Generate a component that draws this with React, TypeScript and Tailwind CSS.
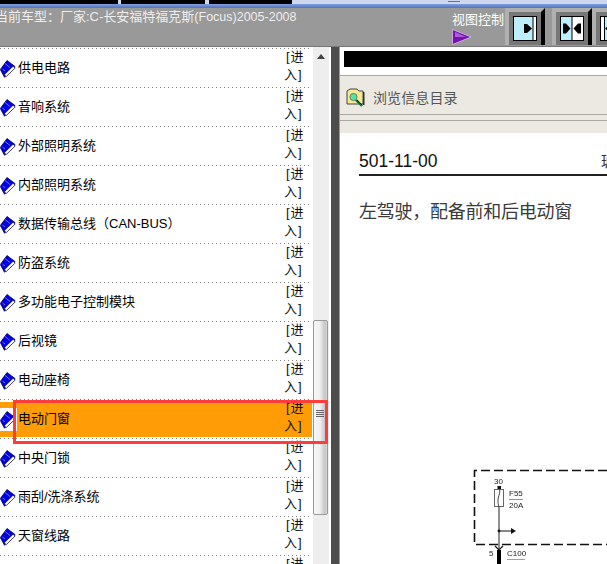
const rows = ['供电电路','音响系统','外部照明系统','内部照明系统','数据传输总线（CAN-BUS）','防盗系统','多功能电子控制模块','后视镜','电动座椅','电动门窗','中央门锁','雨刮/洗涤系统','天窗线路',''];

function Book() {
  return (
    <svg width="16" height="18" viewBox="0 0 16 18" className="block shrink-0">
      <polygon points="7,0.5 15,6.5 4.5,17.3 0.3,9.5" fill="#0000e6" stroke="#00005a" strokeWidth="0.8" />
      <polygon points="13,6.3 15.2,8 6.2,16.6 4.3,14.8" fill="#ffffff" stroke="#10104a" strokeWidth="0.8" />
      <path d="M5 3.5 L10 7.5" stroke="#6a78ff" strokeWidth="1" />
      <path d="M2.5 9 L5 11" stroke="#6a78ff" strokeWidth="1" />
    </svg>
  );
}

function ViewButton({ kind }: { kind: number }) {
  return (
    <svg width="40" height="37" viewBox="0 0 40 37" className="block shrink-0">
      <rect x="0" y="0" width="40" height="37" fill="#b0b0b0" />
      <rect x="4" y="4" width="32" height="33" fill="#777777" />
      <polygon points="36,4 40,0 40,37 36,37" fill="#000000" />
      <rect x="8.5" y="8.5" width="23" height="24" fill="#bdeeff" stroke="#000000" />
      {kind === 0 && (
        <>
          <rect x="28" y="9" width="3" height="23" fill="#ffffff" />
          <rect x="27.5" y="9" width="1" height="23" fill="#000000" />
          <polygon points="19,16 22,16 27,20.5 22,25 19,25" fill="#000000" />
        </>
      )}
      {kind === 1 && (
        <>
          <rect x="20" y="9" width="11" height="23" fill="#ffffff" />
          <rect x="19.5" y="9" width="1" height="23" fill="#000000" />
          <polygon points="11,15.5 14,15.5 18.5,20.5 14,25.5 11,25.5" fill="#000000" />
          <polygon points="29,15.5 26,15.5 21.5,20.5 26,25.5 29,25.5" fill="#000000" />
        </>
      )}
      {kind === 2 && (
        <>
          <rect x="9" y="9" width="3" height="23" fill="#ffffff" />
          <rect x="12" y="9" width="1" height="23" fill="#000000" />
          <polygon points="21,16 18,16 13,20.5 18,25 21,25" fill="#000000" />
        </>
      )}
    </svg>
  );
}

function Row({ label, active }: { label: string; active: boolean }) {
  return (
    <div className="h-[39px] shrink-0 flex flex-col">
      <div className={active ? 'mt-[2px] mr-[1px] h-[35px] bg-[#ff9c06] flex items-center' : 'mt-[2px] mr-[1px] h-[35px] flex items-center'}>
        <div className="w-[17px] h-[23px] bg-white flex items-center shrink-0">
          <Book />
        </div>
        <div className="flex-1 text-[13px] leading-[18px] text-black whitespace-nowrap pl-[1px] mb-[1px]">{label}</div>
        <div className="w-[27px] shrink-0 text-[13px] leading-[18px] text-[#111] tracking-[1px] mb-[5px]">
          <div className="pl-[1px]">[进</div>
          <div className="-ml-[1px]">入]</div>
        </div>
      </div>
      <div className="mt-[1px] h-px mr-[3px] bg-[repeating-linear-gradient(90deg,#808080_0,#808080_1px,transparent_1px,transparent_4px)]" />
    </div>
  );
}

function Scrollbar() {
  return (
    <div className="relative w-[16px] shrink-0 bg-[#eeeeee]">
      <div className="absolute left-[4px] top-[7px] w-0 h-0 border-l-[4px] border-r-[4px] border-b-[5px] border-l-transparent border-r-transparent border-b-[#444]" />
      <div className="absolute left-0 top-[273px] w-[15px] h-[195px] rounded-[2px] border border-[#999] bg-[linear-gradient(90deg,#f6f6f6_0%,#f0f0f0_45%,#c4c4c4_85%,#dcdcdc_100%)]">
        <div className="absolute left-[2px] top-[89px] w-[8px] flex flex-col gap-[1px]">
          <div className="h-px bg-[#666]" />
          <div className="h-px bg-[#666]" />
          <div className="h-px bg-[#666]" />
          <div className="h-px bg-[#666]" />
        </div>
      </div>
    </div>
  );
}

function FolderLens() {
  return (
    <svg width="20" height="20" viewBox="0 0 20 20" className="block shrink-0">
      <path d="M1 3 L4 1 L11 1 L13 3 L17 3 L17 16 L1 16 Z" fill="#f5e890" stroke="#444" strokeWidth="1" />
      <rect x="17" y="4" width="1.5" height="13" fill="#333" />
      <circle cx="7.5" cy="9" r="3.6" fill="#4be8a0" stroke="#777" strokeWidth="1" />
      <path d="M10 12 L16 18" stroke="#0a7a3a" strokeWidth="2.4" />
      <path d="M11 12 L16 17" stroke="#000" strokeWidth="0.8" />
    </svg>
  );
}

function Diagram() {
  return (
    <svg width="134" height="96" viewBox="0 0 134 96" className="block blur-[0.5px]" style={{ fontFamily: '"Liberation Sans", sans-serif' }}>
      <path d="M134 1.5 H1.5 V75.5 H134" fill="none" stroke="#111" strokeWidth="1.6" strokeDasharray="9 4" />
      <rect x="24.5" y="17" width="3.5" height="3.5" fill="#111" />
      <text x="21" y="15" fontSize="8" fill="#222">30</text>
      <rect x="21.5" y="20.5" width="9" height="17" fill="#fff" stroke="#666" strokeWidth="1" />
      <path d="M26 20 C 29 24, 22.5 28, 26 38" fill="none" stroke="#333" strokeWidth="0.9" />
      <text x="36" y="27" fontSize="8" fill="#222">F55</text>
      <rect x="36" y="30" width="14" height="0.8" fill="#777" />
      <text x="36" y="39" fontSize="8" fill="#222">20A</text>
      <path d="M26 38 V80" stroke="#222" strokeWidth="1" />
      <path d="M26 62 H38" stroke="#111" strokeWidth="1" />
      <circle cx="26" cy="62" r="1.4" fill="#111" />
      <polygon points="38,59 43,62 38,65" fill="#111" />
      <path d="M22 77 L26 81 L30 77" fill="none" stroke="#111" strokeWidth="1.2" />
      <rect x="24" y="81" width="4" height="15" fill="#000" />
      <text x="16" y="87" fontSize="8" fill="#222">5</text>
      <text x="34" y="87" fontSize="8" fill="#222">C100</text>
      <rect x="34" y="90" width="18" height="0.8" fill="#888" />
    </svg>
  );
}

export default function App() {
  return (
    <div
      className="relative w-[607px] h-[564px] overflow-hidden flex flex-col bg-white"
      style={{ fontFamily: '"Liberation Sans", "Noto Sans CJK SC", sans-serif' }}
    >
      <div className="h-[4px] shrink-0 flex bg-[#cdd8ee]">
        <div className="w-[118px] bg-black" />
        <div className="w-[3px] bg-[#cdd8ee]" />
        <div className="w-[84px] bg-black" />
        <div className="w-[4px] bg-[#cdd8ee]" />
        <div className="w-[83px] bg-black" />
        <div className="ml-[156px] mt-[1px] w-[12px] h-px bg-[#4f74c4]" />
      </div>
      <div className="h-[4px] shrink-0 bg-[linear-gradient(180deg,#7f9fdc,#4f74c4)]" />
      <div className="h-[39px] shrink-0 bg-[#999999] border-b border-[#777] flex items-start overflow-hidden">
        <div className="-ml-[5px] w-[457px] shrink-0 text-[13px] leading-[18px] text-[#eeeeee] whitespace-nowrap">
          当前车型：厂家:C-长安福特福克斯<span className="text-[12.5px]">(Focus)2005-2008</span>
        </div>
        <div className="w-[53px] shrink-0 mt-[3px] flex flex-col">
          <div className="text-[13px] leading-[18px] text-white whitespace-nowrap">视图控制</div>
          <svg width="20" height="16" viewBox="0 0 20 16" className="block">
            <polygon points="0.5,0.5 19,8 0.5,15.5" fill="#7a10b0" stroke="#e0d0f0" strokeWidth="0.7" />
            <polygon points="3,3 14,8 3,8" fill="#a860d8" />
          </svg>
        </div>
        <div className="shrink-0 flex">
          <ViewButton kind={0} />
          <div className="w-[7px] shrink-0" />
          <ViewButton kind={1} />
          <ViewButton kind={2} />
        </div>
      </div>
      <div className="flex-1 flex min-h-0">
        <div className="w-[313px] shrink-0 overflow-hidden flex flex-col">
          <div className="h-[1px] shrink-0" />
          <div className="h-px shrink-0 mr-[3px] bg-[repeating-linear-gradient(90deg,#808080_0,#808080_1px,transparent_1px,transparent_4px)]" />
          {rows.map((r, i) => (
            <Row key={i} label={r} active={r === '电动门窗'} />
          ))}
        </div>
        <Scrollbar />
        <div className="w-[2px] shrink-0 bg-white" />
        <div className="w-[8px] shrink-0 bg-[#4d4d4d]" />
        <div className="w-px shrink-0 bg-[#999]" />
        <div className="flex-1 min-w-0 flex flex-col">
          <div className="h-[28px] shrink-0 pl-[4px] pt-[4px]">
            <div className="h-[16px] bg-black" />
          </div>
          <div className="h-[39px] shrink-0 border-t border-[#aaa8a0] bg-[#ece9e2] flex items-center pl-[6px] pt-[6px]">
            <FolderLens />
            <span className="ml-[7px] text-[14px] text-[#555] tracking-[0.1px]">浏览信息目录</span>
          </div>
          <div className="h-[6px] shrink-0 border-t border-[#aaa8a0] bg-[#ece9e2]" />
          <div className="h-[13px] shrink-0 border-t border-[#aaa8a0] bg-[#ece9e2]" />
          <div className="flex-1 pl-[19px] pt-[18px] overflow-hidden flex flex-col">
            <div className="h-[26px] border-b-2 border-[#222] flex items-start justify-between whitespace-nowrap w-[300px]">
              <span className="text-[17.5px] leading-[20px] text-[#111]">501-11-00</span>
              <span className="text-[15px] leading-[24px] text-[#333] mt-[-1px] mr-[-1px] w-[59px] block">玻</span>
            </div>
            <div className="mt-[24px] text-[18px] leading-[24px] text-[#3a3a3a] whitespace-nowrap tracking-[-0.25px]" style={{ fontFamily: '"Liberation Serif", "Noto Sans CJK SC", serif' }}>
              左驾驶，配备前和后电动窗
            </div>
            <div className="mt-[245px] ml-[114px]">
              <Diagram />
            </div>
          </div>
        </div>
      </div>
      <div className="absolute left-[13px] top-[400px] w-[315px] h-[44px] border-[3px] border-[#ff3b3b]" />
    </div>
  );
}
